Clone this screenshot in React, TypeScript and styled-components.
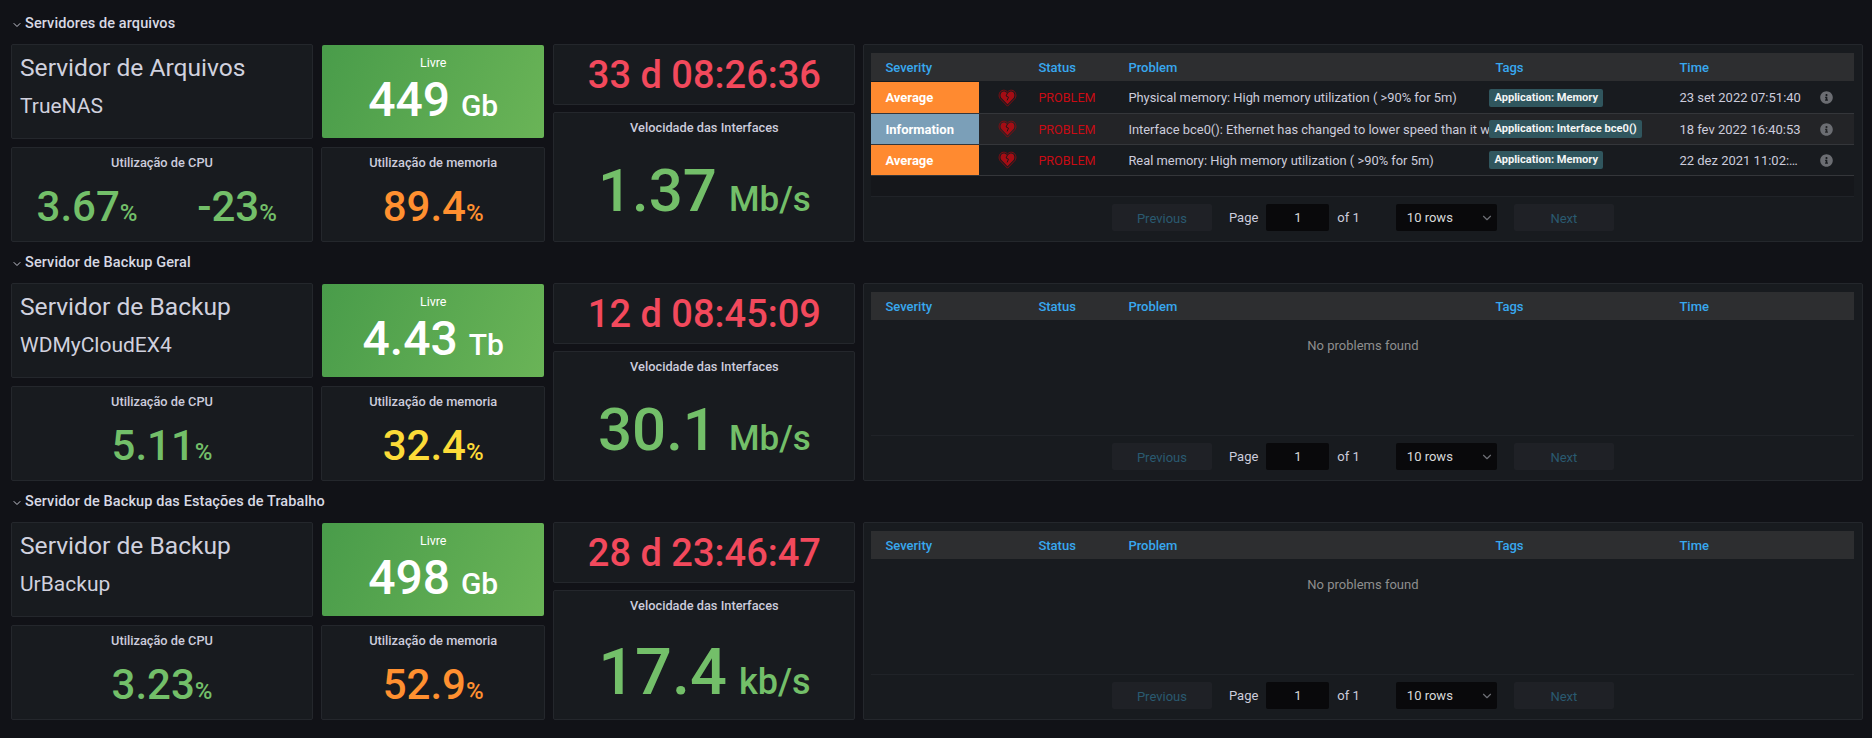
import React from "react";
import styled, { createGlobalStyle } from "styled-components";
import { ChevronDown } from "lucide-react";
import { FaInfoCircle } from "react-icons/fa";

const Global = createGlobalStyle`
  html, body { margin: 0; padding: 0; background: #111217; overflow: hidden; }
  body { font-family: Roboto, "Liberation Sans", sans-serif; color: #ccccdc; }
`;

const Page = styled.div`
  width: 1872px;
  height: 738px;
  box-sizing: border-box;
  padding: 11px 9px 0 11px;
  background: #111217;
  display: flex;
  flex-direction: column;
  gap: 8px;
`;

const Section = styled.section`
  display: flex;
  flex-direction: column;
  height: 231px;
`;

const SectionHeader = styled.div`
  height: 24px;
  box-sizing: border-box;
  padding-top: 2px;
  margin-bottom: 10px;
  display: flex;
  align-items: center;
  gap: 2px;
  font-size: 14.5px;
  font-weight: 500;
  color: #d8d9e4;
  letter-spacing: 0.1px;
  svg { color: #c4c5d0; margin-top: 2px; }
`;

const PanelGrid = styled.div`
  display: grid;
  grid-template-columns: 302px 224.4px 302px 1000px;
  grid-template-rows: 95px 95px;
  gap: 8px;
  height: 198px;
`;

const Panel = styled.div`
  background: #181b1f;
  border: 1px solid #24272c;
  border-radius: 2px;
  box-sizing: border-box;
  min-width: 0;
  min-height: 0;
`;

const InfoPanel = styled(Panel)`
  padding: 6px 0 0 8px;
  color: #d0d1de;
`;

const InfoTitle = styled.div`
  font-size: 24.6px;
  line-height: 34px;
`;

const InfoSub = styled.div`
  font-size: 21px;
  line-height: 28px;
  margin-top: 7px;
`;

const FreePanel = styled.div`
  border: 1px solid transparent;
  background-clip: padding-box;
  border-radius: 3px;
  background-image: linear-gradient(115deg, #499c4a, #6ab457);
  color: #fff;
  text-align: center;
  padding-top: 11px;
  box-sizing: border-box;
`;

const FreeLabel = styled.div`
  font-size: 12.5px;
  line-height: 14px;
`;

const FreeValue = styled.div`
  font-size: 48px;
  line-height: 52px;
  font-weight: 500;
  margin-top: 4px;
  span { font-size: 30px; font-weight: 500; margin-left: -1px; }
`;

const StatPanel = styled(Panel)`
  padding-top: 7px;
  text-align: center;
  display: flex;
  flex-direction: column;
`;

const StatTitle = styled.div`
  font-size: 12.8px;
  line-height: 16px;
  font-weight: 500;
  color: #ccccdc;
`;

const StatRow = styled.div`
  display: flex;
  margin-top: 12px;
`;

const StatValue = styled.div<{ $color: string }>`
  flex: 1;
  color: ${(p) => p.$color};
  font-size: 42px;
  font-weight: 500;
  line-height: 48px;
  span { font-size: 24px; }
`;

const Right = styled.div`
  grid-row: 1 / span 2;
  grid-column: 3;
  display: flex;
  flex-direction: column;
  gap: 7px;
  min-height: 0;
`;

const UptimePanel = styled(Panel)`
  height: 61px;
  display: flex;
  align-items: center;
  justify-content: center;
  color: #f2495c;
  font-size: 38px;
  font-weight: 500;
`;

const SpeedPanel = styled(Panel)`
  flex: 1;
  padding-top: 7px;
  text-align: center;
`;

const SpeedValue = styled.div<{ $large?: boolean }>`
  color: #73bf69;
  font-size: ${(p) => (p.$large ? 65 : 60)}px;
  font-weight: 500;
  line-height: 70px;
  margin-top: ${(p) => (p.$large ? 23 : 20)}px;
  span { font-size: ${(p) => (p.$large ? 36 : 35)}px; margin-left: 12px; }
`;

const TablePanel = styled(Panel)`
  grid-row: 1 / span 2;
  grid-column: 4;
  padding: 8px 8px 0 7px;
  display: flex;
  flex-direction: column;
`;

const TableBody = styled.div`
  height: 144px;
  box-sizing: border-box;
  border-bottom: 1px solid #202328;
  font-size: 13px;
  display: flex;
  flex-direction: column;
`;

const cols = "108px 59px 82px 369px 182px 144px 1fr";

const HeadRow = styled.div`
  display: grid;
  grid-template-columns: ${cols};
  height: 28px;
  flex: none;
  align-items: center;
  background: #2d2e30;
  color: #38a8ef;
  font-weight: 500;
  margin-bottom: 1px;
`;

const HeadCell = styled.div<{ $pad?: number }>`
  padding-left: ${(p) => p.$pad ?? 0}px;
`;

const Row = styled.div<{ $alt?: boolean }>`
  display: grid;
  grid-template-columns: ${cols};
  height: 30px;
  flex: none;
  margin-bottom: 1px;
  box-shadow: 0 1px 0 #34363a;
  align-items: center;
  background: ${(p) => (p.$alt ? "#232427" : "#181b1f")};
  color: #ccccdc;
  &:nth-child(2) { height: 31px; }
`;

const Filler = styled.div`
  flex: 1;
  background: #15171b;
`;

const Severity = styled.div<{ $color: string }>`
  align-self: stretch;
  background: ${(p) => p.$color};
  color: #fff;
  font-weight: 700;
  padding-left: 14px;
  display: flex;
  align-items: center;
`;

const IconCell = styled.div`
  display: flex;
  justify-content: center;
  padding-right: 2px;
`;

const StatusCell = styled.div`
  color: #c90b14;
  font-size: 12.6px;
`;

const ProblemCell = styled.div`
  padding-left: 8px;
  padding-right: 8px;
  font-size: 12.9px;
  white-space: nowrap;
  overflow: hidden;
`;

const TagBadge = styled.span`
  display: inline-block;
  background: #30565e;
  color: #f4f5f5;
  font-size: 11.1px;
  font-weight: 700;
  line-height: 18px;
  padding: 0 5px;
  border-radius: 2px;
`;

const TimeCell = styled.div`
  padding-left: 8px;
  padding-right: 14px;
  white-space: nowrap;
  overflow: hidden;
  text-overflow: ellipsis;
`;

const InfoCell = styled.div`
  color: #6b6d72;
  padding-left: 5px;
  display: flex;
`;

const Empty = styled.div`
  text-align: center;
  color: #8e8e8e;
  padding-top: 17px;
`;

const Pager = styled.div`
  height: 44px;
  display: flex;
  align-items: flex-start;
  padding-top: 7px;
  box-sizing: border-box;
  justify-content: center;
  font-size: 13px;
  color: #ccccdc;
`;

const PageButton = styled.div`
  width: 100px;
  height: 27px;
  box-sizing: border-box;
  padding-top: 2px;
  background: #1f2126;
  border-radius: 2px;
  color: #2a5a70;
  display: flex;
  align-items: center;
  justify-content: center;
`;

const PageLabel = styled.div<{ $gap: number }>`
  height: 27px;
  display: flex;
  align-items: center;
  margin-left: ${(p) => p.$gap}px;
`;

const PageInput = styled.div`
  width: 63px;
  height: 27px;
  margin-left: 8px;
  background: #09090b;
  border-radius: 2px;
  color: #d8d9da;
  display: flex;
  align-items: center;
  justify-content: center;
`;

const RowsSelect = styled.div`
  width: 101px;
  height: 27px;
  margin: 0 17px 0 36px;
  background: #09090b;
  border-radius: 2px;
  color: #d8d9da;
  display: flex;
  align-items: center;
  justify-content: space-between;
  padding: 0 3px 0 11px;
  box-sizing: border-box;
  svg { color: #6e7076; }
`;

const BrokenHeart = () => (
  <svg width="19" height="18" viewBox="0 0 18 18" aria-hidden="true">
    <path
      d="M9 17.2 L1.4 9.4 C-0.4 6.6 0.8 1.6 4.9 1.2 C6.6 1.1 8 1.9 9 3 C10 1.9 11.4 1.1 13.1 1.2 C17.2 1.6 18.4 6.6 16.6 9.4 Z"
      fill="none"
      stroke="#8a0c12"
      strokeWidth="0.9"
    />
    <path
      d="M9 15.2 L2.7 8.8 C1.3 6.6 2.2 2.9 5 2.6 C6.3 2.5 7.5 3.1 8.6 4.2 L9.4 4.2 C10.4 3.1 11.7 2.5 13 2.6 C15.8 2.9 16.7 6.6 15.3 8.8 Z"
      fill="#a50d14"
    />
    <path
      d="M9 3.8 L7.6 7 L10 8.2 L8.6 11.4"
      fill="none"
      stroke="#22161a"
      strokeWidth="1"
    />
  </svg>
);

const problems = [
  { sev: "Average", color: "#ff8a30", text: "Physical memory: High memory utilization ( >90% for 5m)", tag: "Application: Memory", time: "23 set 2022 07:51:40" },
  { sev: "Information", color: "#7b9fb8", text: "Interface bce0(): Ethernet has changed to lower speed than it was before", tag: "Application: Interface bce0()", time: "18 fev 2022 16:40:53" },
  { sev: "Average", color: "#ff8a30", text: "Real memory: High memory utilization ( >90% for 5m)", tag: "Application: Memory", time: "22 dez 2021 11:02:34" },
];

type Stat = { v: string; color: string };

type ServerData = {
  section: string;
  title: string;
  sub: string;
  free: string;
  freeUnit: string;
  cpu: Stat[];
  mem: Stat;
  uptime: string;
  speed: string;
  speedUnit: string;
  largeSpeed?: boolean;
  hasRows?: boolean;
};

const GREEN = "#73bf69";

const servers: ServerData[] = [
  { section: "Servidores de arquivos", title: "Servidor de Arquivos", sub: "TrueNAS", free: "449", freeUnit: "Gb", cpu: [{ v: "3.67", color: GREEN }, { v: "-23", color: GREEN }], mem: { v: "89.4", color: "#ff9030" }, uptime: "33 d 08:26:36", speed: "1.37", speedUnit: "Mb/s", hasRows: true },
  { section: "Servidor de Backup Geral", title: "Servidor de Backup", sub: "WDMyCloudEX4", free: "4.43", freeUnit: "Tb", cpu: [{ v: "5.11", color: GREEN }], mem: { v: "32.4", color: "#fcdb38" }, uptime: "12 d 08:45:09", speed: "30.1", speedUnit: "Mb/s" },
  { section: "Servidor de Backup das Estações de Trabalho", title: "Servidor de Backup", sub: "UrBackup", free: "498", freeUnit: "Gb", cpu: [{ v: "3.23", color: GREEN }], mem: { v: "52.9", color: "#ff9030" }, uptime: "28 d 23:46:47", speed: "17.4", speedUnit: "kb/s", largeSpeed: true },
];

const ProblemsTable = ({ hasRows }: { hasRows?: boolean }) => (
  <TablePanel>
    <TableBody>
      <HeadRow>
        <HeadCell $pad={14}>Severity</HeadCell>
        <HeadCell />
        <HeadCell>Status</HeadCell>
        <HeadCell $pad={8}>Problem</HeadCell>
        <HeadCell $pad={6}>Tags</HeadCell>
        <HeadCell $pad={8}>Time</HeadCell>
        <HeadCell />
      </HeadRow>
      {hasRows ? (
        <>
          {problems.map((p, i) => (
            <Row key={i} $alt={i === 1}>
              <Severity $color={p.color}>{p.sev}</Severity>
              <IconCell><BrokenHeart /></IconCell>
              <StatusCell>PROBLEM</StatusCell>
              <ProblemCell>{p.text}</ProblemCell>
              <div><TagBadge>{p.tag}</TagBadge></div>
              <TimeCell>{p.time}</TimeCell>
              <InfoCell><FaInfoCircle size={13} /></InfoCell>
            </Row>
          ))}
          <Filler />
        </>
      ) : (
        <Empty>No problems found</Empty>
      )}
    </TableBody>
    <Pager>
      <PageButton>Previous</PageButton>
      <PageLabel $gap={17}>Page</PageLabel>
      <PageInput>1</PageInput>
      <PageLabel $gap={8}>of 1</PageLabel>
      <RowsSelect>10 rows<ChevronDown size={14} /></RowsSelect>
      <PageButton>Next</PageButton>
    </Pager>
  </TablePanel>
);

const ServerSection = ({ s }: { s: ServerData }) => (
  <Section>
    <SectionHeader>
      <ChevronDown size={12} />
      {s.section}
    </SectionHeader>
    <PanelGrid>
      <InfoPanel>
        <InfoTitle>{s.title}</InfoTitle>
        <InfoSub>{s.sub}</InfoSub>
      </InfoPanel>
      <FreePanel>
        <FreeLabel>Livre</FreeLabel>
        <FreeValue>{s.free} <span>{s.freeUnit}</span></FreeValue>
      </FreePanel>
      <Right>
        <UptimePanel>{s.uptime}</UptimePanel>
        <SpeedPanel>
          <StatTitle>Velocidade das Interfaces</StatTitle>
          <SpeedValue $large={s.largeSpeed}>{s.speed}<span>{s.speedUnit}</span></SpeedValue>
        </SpeedPanel>
      </Right>
      <ProblemsTable hasRows={s.hasRows} />
      <StatPanel>
        <StatTitle>Utilização de CPU</StatTitle>
        <StatRow>
          {s.cpu.map((c) => (
            <StatValue key={c.v} $color={c.color}>{c.v}<span>%</span></StatValue>
          ))}
        </StatRow>
      </StatPanel>
      <StatPanel>
        <StatTitle>Utilização de memoria</StatTitle>
        <StatRow>
          <StatValue $color={s.mem.color}>{s.mem.v}<span>%</span></StatValue>
        </StatRow>
      </StatPanel>
    </PanelGrid>
  </Section>
);

export default function App() {
  return (
    <>
      <Global />
      <Page>
        {servers.map((s) => (
          <ServerSection key={s.section} s={s} />
        ))}
      </Page>
    </>
  );
}
